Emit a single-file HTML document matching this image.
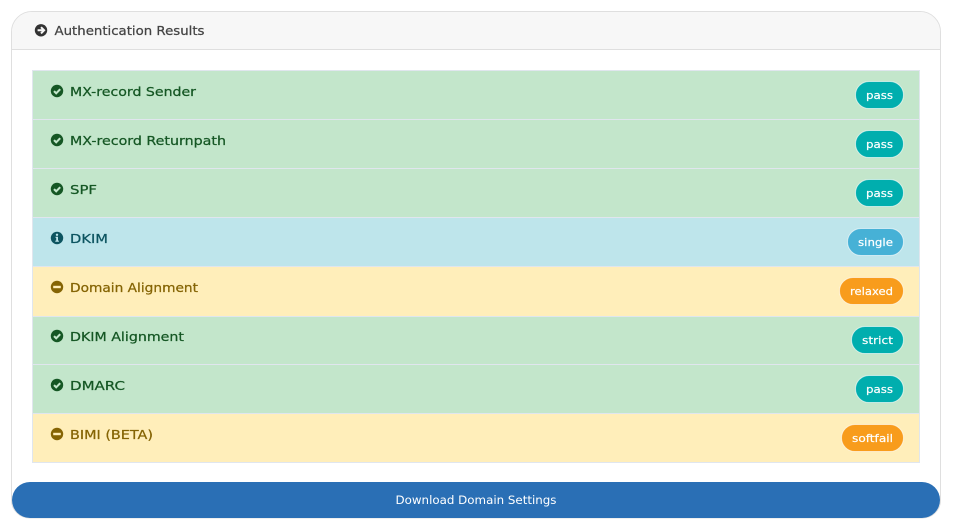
<!DOCTYPE html>
<html><head><meta charset="utf-8"><style>
html,body{margin:0;padding:0;background:#fff;width:959px;height:532px;overflow:hidden}
svg{display:block;position:absolute;left:0;top:0}
text{font-family:"DejaVu Sans","Liberation Sans",sans-serif}
.t{font-size:12.500px;stroke-width:.25px}
.p{font-size:11px;fill:#fff;stroke:#fff;stroke-width:.2px;text-anchor:middle}
.g{fill:#155724;stroke:#155724}.b{fill:#0c5460;stroke:#0c5460}.y{fill:#856404;stroke:#856404}
.pl{stroke:#fff;stroke-opacity:.6;stroke-width:1}
</style></head><body>
<svg width="959" height="532" viewBox="0 0 959 532" xmlns="http://www.w3.org/2000/svg">
<path d="M11.500 500V32a20.500 20.500 0 0 1 20.500-20.500H920a20.500 20.500 0 0 1 20.500 20.500V500a18 18 0 0 1-18 18H30a18 18 0 0 1-18.500-18z" fill="#fff" stroke="#dfdfdf"/>
<path d="M12 49.500V32A20 20 0 0 1 32 12H920a20 20 0 0 1 20 20V49.500z" fill="#f7f7f7"/>
<rect x="12" y="49" width="928" height="1" fill="#dfdfdf"/>
<circle cx="41" cy="30.300" r="6.200" fill="#333"/>
<path d="M37.600 30.300H43.800M41 27.200L44.100 30.300L41 33.400" fill="none" stroke="#f7f7f7" stroke-width="2"/>
<text x="54.500" y="35" class="t" fill="#444" stroke="#444" stroke-width=".1" textLength="150" lengthAdjust="spacingAndGlyphs">Authentication Results</text>

<rect x="32" y="70" width="888" height="393" fill="#e0e6ee"/>
<rect x="33" y="71" width="886" height="48" fill="#c3e6cb"/>
<rect x="33" y="120" width="886" height="48" fill="#c3e6cb"/>
<rect x="33" y="169" width="886" height="48" fill="#c3e6cb"/>
<rect x="33" y="218" width="886" height="48" fill="#bee5eb"/>
<rect x="33" y="267" width="886" height="49" fill="#ffeeba"/>
<rect x="33" y="317" width="886" height="47" fill="#c3e6cb"/>
<rect x="33" y="365" width="886" height="48" fill="#c3e6cb"/>
<rect x="33" y="414" width="886" height="48" fill="#ffeeba"/>

<g fill="none" stroke="#c3e6cb" stroke-width="2.100">
<circle cx="57" cy="91" r="6.200" fill="#155724" stroke="none"/><path d="M54 91.100L56.200 93.300L60.200 89.200"/>
<circle cx="57" cy="140" r="6.200" fill="#155724" stroke="none"/><path d="M54 140.100L56.200 142.300L60.200 138.200"/>
<circle cx="57" cy="189" r="6.200" fill="#155724" stroke="none"/><path d="M54 189.100L56.200 191.300L60.200 187.200"/>
<circle cx="57" cy="336" r="6.200" fill="#155724" stroke="none"/><path d="M54 336.100L56.200 338.300L60.200 334.200"/>
<circle cx="57" cy="385" r="6.200" fill="#155724" stroke="none"/><path d="M54 385.100L56.200 387.300L60.200 383.200"/>
</g>
<circle cx="57" cy="238" r="6.200" fill="#0c5460"/>
<path d="M55.600 236.800H58V240.600H58.900V241.800H55.300V240.600H56.200V238H55.600z" fill="#bee5eb"/>
<circle cx="57" cy="234.800" r="1.200" fill="#bee5eb"/>
<circle cx="57" cy="287" r="6.200" fill="#856404"/><rect x="53.200" y="285.800" width="7.600" height="2.400" fill="#ffeeba"/>
<circle cx="57" cy="434" r="6.200" fill="#856404"/><rect x="53.200" y="432.800" width="7.600" height="2.400" fill="#ffeeba"/>

<text x="70" y="96" class="t g" textLength="126" lengthAdjust="spacingAndGlyphs">MX-record Sender</text>
<text x="70" y="145" class="t g" textLength="156" lengthAdjust="spacingAndGlyphs">MX-record Returnpath</text>
<text x="70" y="194" class="t g" textLength="27" lengthAdjust="spacingAndGlyphs">SPF</text>
<text x="70" y="243" class="t b" textLength="38" lengthAdjust="spacingAndGlyphs">DKIM</text>
<text x="70" y="292" class="t y" textLength="128" lengthAdjust="spacingAndGlyphs">Domain Alignment</text>
<text x="70" y="341" class="t g" textLength="114" lengthAdjust="spacingAndGlyphs">DKIM Alignment</text>
<text x="70" y="390" class="t g" textLength="55" lengthAdjust="spacingAndGlyphs">DMARC</text>
<text x="70" y="439" class="t y" textLength="83" lengthAdjust="spacingAndGlyphs">BIMI (BETA)</text>

<rect class="pl" x="855.500" y="81.500" width="48" height="27" rx="13.500" fill="#00aeae"/>
<rect class="pl" x="855.500" y="130.500" width="48" height="27" rx="13.500" fill="#00aeae"/>
<rect class="pl" x="855.500" y="179.500" width="48" height="27" rx="13.500" fill="#00aeae"/>
<rect class="pl" x="847.500" y="228.500" width="56" height="27" rx="13.500" fill="#46b1d6"/>
<rect class="pl" x="839.500" y="277.500" width="64" height="27" rx="13.500" fill="#f89c1c"/>
<rect class="pl" x="851.500" y="326.500" width="52" height="27" rx="13.500" fill="#00aeae"/>
<rect class="pl" x="855.500" y="375.500" width="48" height="27" rx="13.500" fill="#00aeae"/>
<rect class="pl" x="841.500" y="424.500" width="62" height="27" rx="13.500" fill="#f89c1c"/>

<text x="879.500" y="99" class="p" textLength="27" lengthAdjust="spacingAndGlyphs">pass</text>
<text x="879.500" y="148" class="p" textLength="27" lengthAdjust="spacingAndGlyphs">pass</text>
<text x="879.500" y="197" class="p" textLength="27" lengthAdjust="spacingAndGlyphs">pass</text>
<text x="875.500" y="246" class="p" textLength="35" lengthAdjust="spacingAndGlyphs">single</text>
<text x="871.500" y="295" class="p" textLength="43" lengthAdjust="spacingAndGlyphs">relaxed</text>
<text x="877.500" y="344" class="p" textLength="31" lengthAdjust="spacingAndGlyphs">strict</text>
<text x="879.500" y="393" class="p" textLength="27" lengthAdjust="spacingAndGlyphs">pass</text>
<text x="872.500" y="442" class="p" textLength="41" lengthAdjust="spacingAndGlyphs">softfail</text>

<rect x="12" y="482" width="928" height="36" rx="18" fill="#2a6fb5"/>
<text x="476" y="504" font-size="11.500" fill="#fff" text-anchor="middle" textLength="161" lengthAdjust="spacingAndGlyphs">Download Domain Settings</text>
</svg>
</body></html>
